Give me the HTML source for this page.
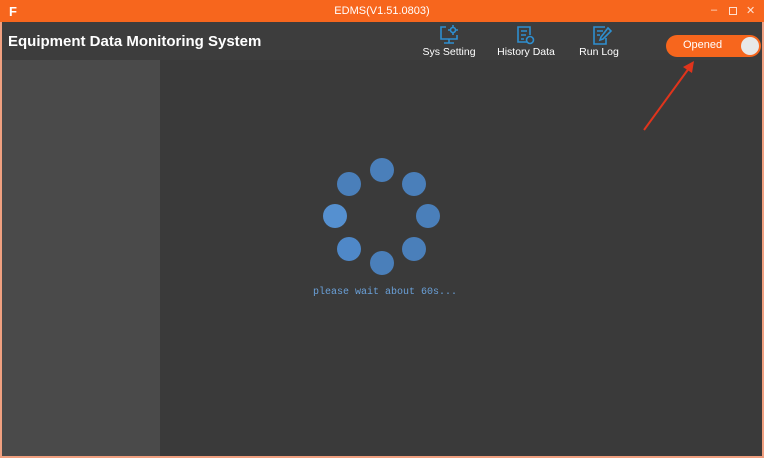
<!DOCTYPE html>
<html><head><meta charset="utf-8"><style>
*{margin:0;padding:0;box-sizing:border-box}
body{width:764px;height:458px;overflow:hidden;background:#f0a080;font-family:"Liberation Sans",sans-serif;position:relative}
#tb{position:absolute;left:0;top:0;width:764px;height:22px;background:#f7661d;color:#fff;font-size:11px}
#win{position:absolute;left:2px;top:22px;width:760px;height:434px;background:#454545}
#hdr{position:absolute;left:0;top:0;width:760px;height:38px;background:#3d3d3d}
#side{position:absolute;left:0;top:38px;width:158px;height:396px;background:#4a4a4a}
#main{position:absolute;left:158px;top:38px;width:602px;height:396px;background:#3a3a3a}
.nav{position:absolute;top:28px;color:#fff;font-size:10.5px;text-align:center}
.dot{position:absolute;width:24px;height:24px;border-radius:50%;background:#4a7fba}
</style></head><body>
<div id="tb">
 <div style="position:absolute;left:9px;top:4px;font-weight:bold;font-size:13px;color:#fff">F</div>
 <div style="position:absolute;left:0;width:764px;top:5px;text-align:center">EDMS(V1.51.0803)</div>
 <div style="position:absolute;left:711px;top:4px;opacity:.8">–</div>
 <div style="position:absolute;left:729px;top:7px;width:8px;height:8px;border:1px solid #fff;opacity:.8"></div>
 <div style="position:absolute;left:746px;top:4px;opacity:.8">✕</div>
</div>
<div id="win">
 <div id="hdr">
  <div style="position:absolute;left:6px;top:11px;color:#fff;font-weight:bold;font-size:15px">Equipment Data Monitoring System</div>
 </div>
 <div id="side"></div>
 <div id="main"></div>
</div>
<svg style="position:absolute;left:438px;top:24px" width="24" height="22" fill="none" stroke="#2e8fd0" stroke-width="1.6"><path d="M8 3H3v12h16v-4M11 15v4M6 19h10"/><circle cx="15" cy="6" r="2.5"/><path d="M15 1v2M15 9v2M10 6h2M18 6h2"/></svg>
<svg style="position:absolute;left:515px;top:24px" width="22" height="22" fill="none" stroke="#2e8fd0" stroke-width="1.6"><path d="M12 18H3V3h12v8M6 7h6M6 11h5M6 15h3"/><circle cx="15" cy="16" r="3.5"/></svg>
<svg style="position:absolute;left:591px;top:24px" width="22" height="22" fill="none" stroke="#2e8fd0" stroke-width="1.6"><path d="M14 3H3v17h12v-6M6 7h6M6 11h3"/><path d="M17 4l3 3-8 8-3 1 1-3z"/></svg>
<div class="nav" style="left:420px;top:46px;width:58px">Sys Setting</div>
<div class="nav" style="left:494px;top:46px;width:64px">History Data</div>
<div class="nav" style="left:576px;top:46px;width:46px">Run Log</div>
<div style="position:absolute;left:666px;top:35px;width:95px;height:22px;border-radius:11px;background:#f7661d;color:#fff;font-size:11px">
 <span style="position:absolute;left:17px;top:4px">Opened</span>
 <div style="position:absolute;right:2px;top:2px;width:18px;height:18px;border-radius:50%;background:#e8e8e8"></div>
</div>
<svg style="position:absolute;left:0;top:0" width="764" height="458"><path d="M644 130L692 64" stroke="#e0341c" stroke-width="2"/><path d="M683 67L694 61 692 73z" fill="#e0341c"/></svg>
<div class="dot" style="left:370px;top:158px"></div>
<div class="dot" style="left:402px;top:172px"></div>
<div class="dot" style="left:416px;top:204px"></div>
<div class="dot" style="left:402px;top:237px"></div>
<div class="dot" style="left:370px;top:251px"></div>
<div class="dot" style="left:337px;top:237px;background:#4f88c8"></div>
<div class="dot" style="left:323px;top:204px;background:#5590d0"></div>
<div class="dot" style="left:337px;top:172px"></div>
<div style="position:absolute;left:313px;top:287px;color:#6aa0d8;font-family:'Liberation Mono',monospace;font-size:10px">please wait about 60s...</div>
</body></html>
